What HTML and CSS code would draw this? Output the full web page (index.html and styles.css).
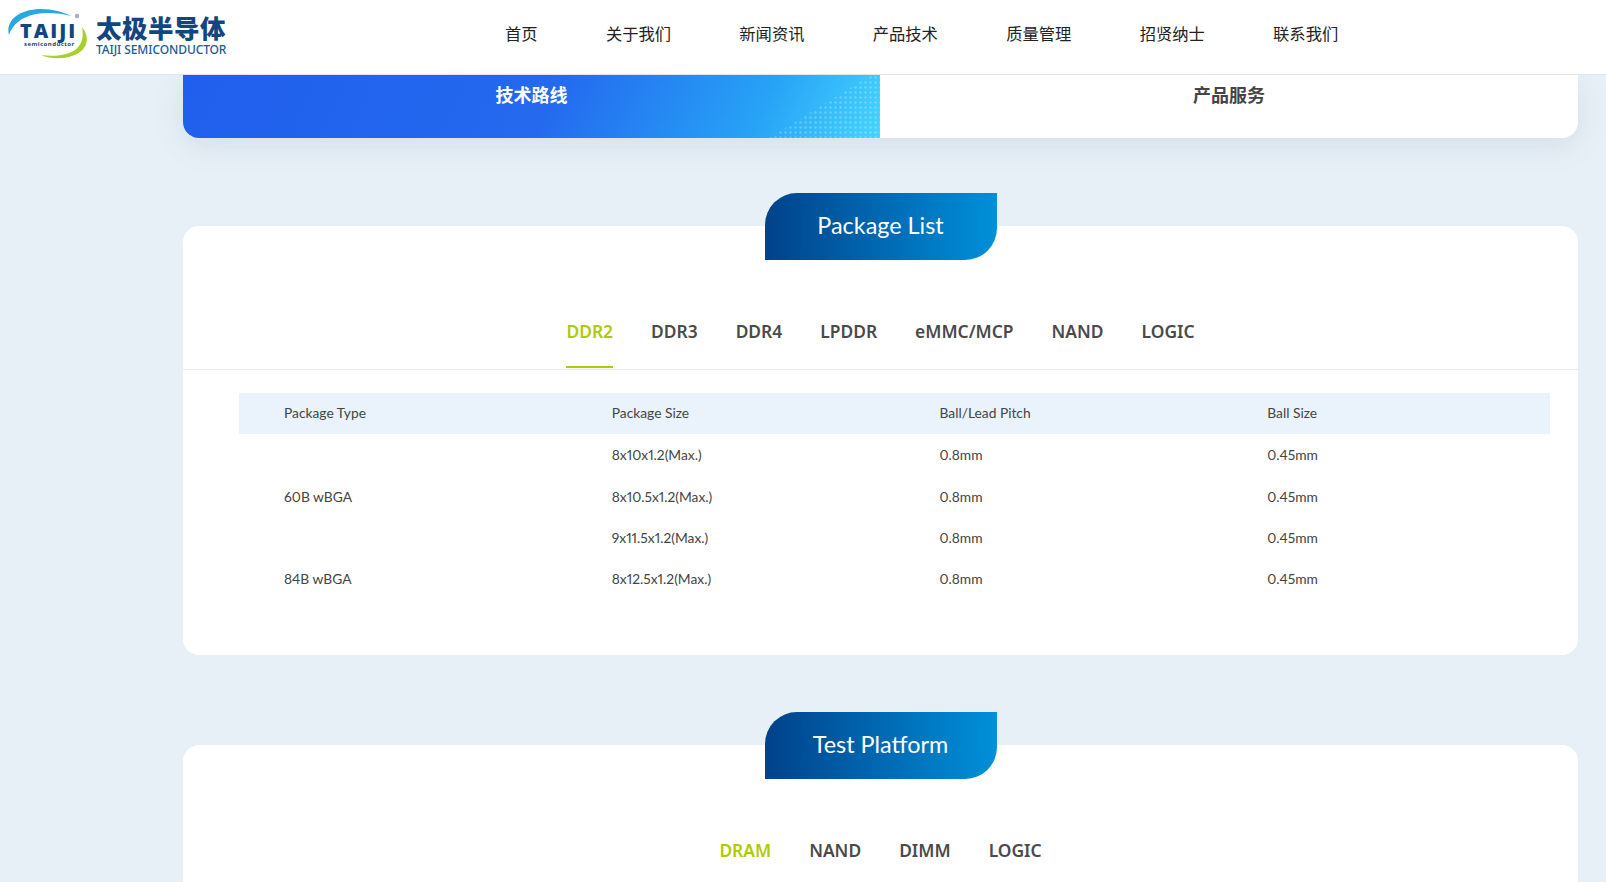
FILE: index.html
```html
<!DOCTYPE html>
<html lang="zh">
<head>
<meta charset="utf-8">
<title>TAIJI Semiconductor</title>
<link rel="stylesheet" href="styles.css">
</head>
<body>
<header class="header">
  <a class="logo">
    <span class="logo-mark">
      <svg class="logo-arcs" viewBox="0 0 84 52" width="84" height="52">
        <path d="M2 27C-2 12 13 1 34 1c12 0 22 3 30 7-11-3-24-4-35-2C14 9 5 17 2 27z" fill="#29a8e0"/>
        <path d="M75 19c8 10 6 21-5 27-10 5-25 6-36 1 13 2 27 0 34-5 7-5 9-14 7-23z" fill="#a8cf2e"/>
        <circle cx="70" cy="8" r="2.2" fill="#9db4c8"/>
      </svg>
      <span class="logo-taiji">TAIJI</span>
      <span class="logo-semi">semiconductor</span>
    </span>
    <span class="logo-name">
      <span class="logo-cn">太极半导体</span>
      <span class="logo-en">TAIJI SEMICONDUCTOR</span>
    </span>
  </a>
  <nav class="nav">
    <a>首页</a><a>关于我们</a><a>新闻资讯</a><a>产品技术</a><a>质量管理</a><a>招贤纳士</a><a>联系我们</a>
  </nav>
</header>

<main class="main">
  <div class="switch">
    <div class="switch-item switch-active"><span class="switch-label">技术路线</span></div>
    <div class="switch-item"><span class="switch-label">产品服务</span></div>
  </div>

  <section class="card card-first">
    <h2 class="pill">Package List</h2>
    <ul class="tabs">
      <li class="tab tab-active">DDR2</li><li class="tab">DDR3</li><li class="tab">DDR4</li><li class="tab">LPDDR</li><li class="tab">eMMC/MCP</li><li class="tab">NAND</li><li class="tab">LOGIC</li>
    </ul>
    <table class="table">
      <thead>
        <tr><th>Package Type</th><th>Package Size</th><th>Ball/Lead Pitch</th><th>Ball Size</th></tr>
      </thead>
      <tbody>
        <tr><td rowspan="3">60B wBGA</td><td>8x10x1.2(Max.)</td><td>0.8mm</td><td>0.45mm</td></tr>
        <tr><td>8x10.5x1.2(Max.)</td><td>0.8mm</td><td>0.45mm</td></tr>
        <tr><td>9x11.5x1.2(Max.)</td><td>0.8mm</td><td>0.45mm</td></tr>
        <tr><td>84B wBGA</td><td>8x12.5x1.2(Max.)</td><td>0.8mm</td><td>0.45mm</td></tr>
      </tbody>
    </table>
  </section>

  <section class="card card-second">
    <h2 class="pill">Test Platform</h2>
    <ul class="tabs tabs-plain">
      <li class="tab tab-active">DRAM</li><li class="tab">NAND</li><li class="tab">DIMM</li><li class="tab">LOGIC</li>
    </ul>
  </section>
</main>
</body>
</html>
```
FILE: styles.css
```css
* { box-sizing: border-box; }
html, body { margin: 0; padding: 0; }
body {
  height: 882px;
  overflow: hidden;
  background: #e7f0f6;
  font-family: "Noto Sans", "Noto Sans CJK SC", sans-serif;
  color: #444;
}
.header {
  height: 75px;
  background: #fff;
  border-bottom: 1px solid #e2e5e8;
  display: flex;
  align-items: flex-start;
  position: relative;
  z-index: 2;
}
.logo { display: flex; margin: 8px 0 0 7px; width: 498px; }
.logo-mark { position: relative; display: block; width: 84px; height: 52px; }
.logo-arcs { position: absolute; left: 0; top: 0; }
.logo-taiji {
  position: absolute; left: 13px; top: 13px;
  font: 800 20px/20px "Open Sans", sans-serif;
  letter-spacing: 2px;
  color: #12467f;
}
.logo-semi {
  position: absolute; left: 17px; top: 33px;
  font: 700 6px/7px "Noto Sans", sans-serif;
  letter-spacing: .45px;
  color: #12467f;
}
.logo-name { display: flex; flex-direction: column; margin-left: 5px; color: #12467f; }
.logo-cn {
  font: 900 25.5px/30px "Noto Sans CJK SC", sans-serif;
  letter-spacing: .5px;
  margin-top: 4px;
}
.logo-en {
  font: 500 12px/15px "Noto Sans", sans-serif;
  letter-spacing: -.1px;
  color: #1a5a96;
}
.nav {
  display: flex;
  gap: 68.3px;
  padding-top: 20px;
  font: 400 16.3px/26px "Noto Sans CJK SC", sans-serif;
  color: #222;
}
.main { padding: 0 28px 0 183px; }
.switch {
  display: flex;
  height: 63px;
  border-radius: 0 0 16px 16px;
  overflow: hidden;
  background: #fff;
  box-shadow: 0 8px 30px rgba(80, 110, 140, .12);
}
.switch-item {
  flex: 1;
  padding-top: 5px;
  text-align: center;
  font: 700 18px/28px "Noto Sans CJK SC", sans-serif;
  color: #444;
  position: relative;
}
.switch-label { position: relative; }
.switch-active {
  flex: 0 0 697px;
  color: #fff;
  background: linear-gradient(115deg, #205fed 0%, #2469ee 52%, #27a3f6 82%, #45d4ff 100%);
}
.switch-active::before {
  content: "";
  position: absolute;
  inset: 0;
  clip-path: polygon(586px 100%, 688px 0, 100% 0, 100% 100%);
  background:
    linear-gradient(118deg, rgba(255,255,255,.2) 0 14%, transparent 36%),
    radial-gradient(rgba(255,255,255,.2) 1.1px, transparent 1.5px) 0 0 / 5px 5px;
}
.card {
  position: relative;
  display: flow-root;
  background: #fff;
  border-radius: 16px;
}
.card-first { margin-top: 88px; height: 429px; }
.card-second { margin-top: 90px; height: 300px; }
.pill {
  width: 232px;
  height: 67px;
  margin: -33px auto 0;
  border-radius: 32px 0 32px 0;
  background: linear-gradient(90deg, #00428a 0%, #0090d9 100%);
  color: #fff;
  text-align: center;
  font: 400 23.4px/65px "Lato", sans-serif;
}
.tabs {
  display: flex;
  justify-content: center;
  gap: 38px;
  list-style: none;
  margin: 38px 0 0;
  padding: 0;
  height: 72px;
  border-bottom: 1px solid #e8e9ea;
}
.tabs-plain { border-bottom: 0; }
.tab {
  height: 70px;
  font: 600 17.4px/66px "Noto Sans", sans-serif;
  color: #4a4a4a;
}
.tab-active {
  color: #aecb00;
  border-bottom: 2px solid #aecb00;
}
.table {
  width: 1311px;
  margin: 23px 0 0 56px;
  border-collapse: collapse;
  table-layout: fixed;
  font-family: "Lato", "Noto Sans", sans-serif;
  font-variant-numeric: proportional-nums;
  font-size: 13.8px;
  color: #444;
}
.table th {
  height: 41px;
  padding: 0 0 3px 45px;
  background: #eaf3fb;
  font-weight: 400;
  text-align: left;
}
.table td {
  height: 41.4px;
  padding: 0 0 0 45px;
}
```
